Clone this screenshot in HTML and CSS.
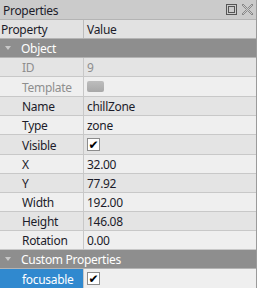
FILE: index.html
```html
<!DOCTYPE html>
<html>
<head>
<meta charset="utf-8">
<link rel="stylesheet" href="styles.css">
</head>
<body>
<div class="panel">
  <div class="titlebar">
    <span class="title">Properties</span>
    <span class="tb-icons">
      <svg width="11" height="11" viewBox="0 0 11 11"><rect x="0.5" y="0.5" width="10" height="10" fill="none" stroke="#555" stroke-width="1"/><rect x="2.5" y="2.5" width="6" height="6" fill="none" stroke="#555" stroke-width="1"/></svg>
      <svg width="11" height="11" viewBox="0 0 11 11"><path d="M1 0 L5.5 4.5 L10 0 L11 1 L6.5 5.5 L11 10 L10 11 L5.5 6.5 L1 11 L0 10 L4.5 5.5 L0 1 Z" fill="none" stroke="#777" stroke-width="0.8"/></svg>
    </span>
  </div>
  <div class="row header">
    <div class="cell name">Property</div>
    <div class="cell value">Value</div>
  </div>
  <div class="row group">
    <span class="arrow"></span><span class="gtext">Object</span>
  </div>
  <div class="row dark"><div class="cell name disabled">ID</div><div class="cell value disabled">9</div></div>
  <div class="row tall"><div class="cell name disabled">Template</div><div class="cell value"><span class="tmpl"></span></div></div>
  <div class="row dark"><div class="cell name">Name</div><div class="cell value">chillZone</div></div>
  <div class="row"><div class="cell name">Type</div><div class="cell value">zone</div></div>
  <div class="row dark tall"><div class="cell name">Visible</div><div class="cell value"><span class="check">✔</span></div></div>
  <div class="row"><div class="cell name">X</div><div class="cell value">32.00</div></div>
  <div class="row dark"><div class="cell name">Y</div><div class="cell value">77.92</div></div>
  <div class="row"><div class="cell name">Width</div><div class="cell value">192.00</div></div>
  <div class="row dark"><div class="cell name">Height</div><div class="cell value">146.08</div></div>
  <div class="row"><div class="cell name">Rotation</div><div class="cell value">0.00</div></div>
  <div class="row group">
    <span class="arrow"></span><span class="gtext">Custom Properties</span>
  </div>
  <div class="row tall"><div class="cell name selected">focusable</div><div class="cell value"><span class="check">✔</span></div></div>
</div>
</body>
</html>
```
FILE: styles.css
```css
html, body {
  margin: 0;
  padding: 0;
  background: #f0f0f0;
}
body {
  font-family: "Noto Sans", "Open Sans", sans-serif;
  font-size: 12px;
  letter-spacing: -0.3px;
  color: #1c1c2a;
}
.panel {
  width: 256px;
  height: 288px;
  border-right: 1px solid #9a9a9a;
  overflow: hidden;
  background: #f0f0f0;
}
.titlebar {
  height: 20px;
  background: #cbcbcb;
  display: flex;
  align-items: center;
  justify-content: space-between;
  padding: 0 3px 0 3px;
  box-sizing: border-box;
  border-bottom: 1px solid #b4b4b4;
}
.title {
  line-height: 18px;
  padding-top: 2px;
}
.tb-icons {
  display: flex;
  gap: 5px;
  align-items: center;
}
.tb-icons svg {
  display: block;
}
.row {
  display: flex;
  height: 19px;
  box-sizing: border-box;
  border-bottom: 1px solid #c8c8c8;
  background: #efefef;
  line-height: 16px;
}
.row.tall {
  height: 20px;
  line-height: 17px;
}
.row.dark {
  background: #e4e4e4;
}
.cell {
  white-space: nowrap;
  overflow: hidden;
  padding-top: 2px;
}
.cell.name {
  width: 84px;
  box-sizing: border-box;
  padding-left: 22px;
  border-right: 1px solid #c8c8c8;
}
.cell.value {
  flex: 1;
  padding-left: 3px;
  display: flex;
  align-items: center;
}
.cell.value:has(.check), .cell.value:has(.tmpl) {
  padding-top: 0;
}
.header {
  background: #e2e2e2;
  border-bottom: 1px solid #b4b4b4;
}
.header .cell.name {
  padding-left: 1px;
  border-right-color: #bcbcbc;
}
.group {
  background: #8e8e8e;
  color: #ffffff;
  border-bottom: 1px solid #b4b4b4;
  align-items: center;
}
.gtext {
  padding-top: 2px;
  line-height: 16px;
}
.arrow {
  width: 0;
  height: 0;
  margin-left: 5px;
  margin-right: 10px;
  border-left: 3px solid transparent;
  border-right: 3px solid transparent;
  border-top: 4px solid #c9c9c9;
}
.disabled {
  color: #8e8e8e;
}
.selected {
  background: #3089cf;
  color: #ffffff;
}
.tmpl {
  display: inline-block;
  width: 17px;
  height: 11px;
  border-radius: 2px;
  background: linear-gradient(#bdbdbd, #a8a8a8);
}
.check {
  display: inline-flex;
  align-items: center;
  justify-content: center;
  width: 13px;
  height: 13px;
  box-sizing: border-box;
  border: 1px solid #8c8c8c;
  background: #ffffff;
  color: #000;
  font-size: 12px;
  line-height: 1;
  letter-spacing: 0;
  font-family: "DejaVu Sans", sans-serif;
}
```
